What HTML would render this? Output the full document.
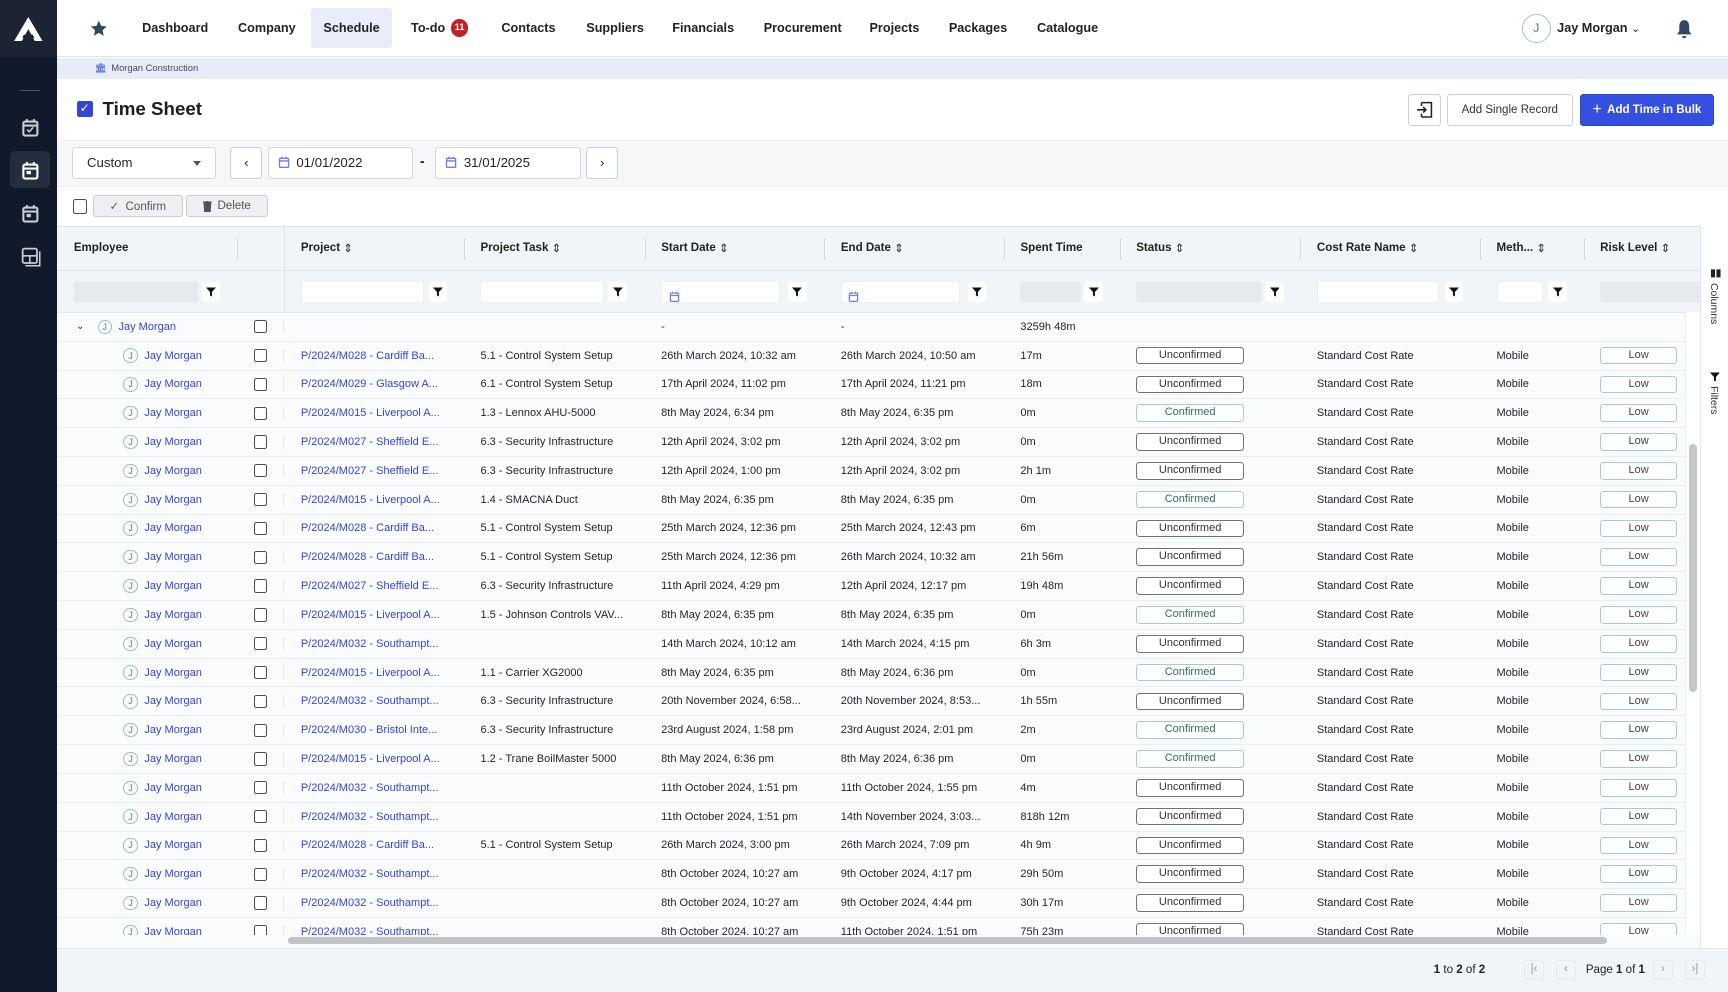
<!DOCTYPE html>
<html><head><meta charset="utf-8"><style>
html{zoom:1.10204}
*{box-sizing:border-box;margin:0;padding:0}
body{width:1568px;height:900px;overflow:hidden;font-family:"Liberation Sans",sans-serif;color:#1f2328;background:#fff;position:relative}
.side{position:absolute;left:0;top:0;width:52px;height:900px;background:#111a2b}
.logo{position:absolute;left:0;top:0;width:52px;height:52px;background:#1c2433;display:flex;align-items:center;justify-content:center}
.sic{position:absolute;left:19px}
.top{position:absolute;left:52px;top:0;right:0;height:52px;border-bottom:1px solid #dfe3e8;background:#fff}
.nav{position:absolute;top:7px;height:37px;font-size:11.5px;font-weight:bold;color:#222;display:flex;align-items:center;padding:0 13px;border-radius:3px}
.bc{position:absolute;left:52px;top:53px;right:0;height:19px;background:#e8ecf8;font-size:8.5px;color:#3d4a6b;padding-left:49px;line-height:19px}
.title{position:absolute;left:93px;top:89px;font-size:17px;font-weight:bold;color:#1a1d24}
.fbar{position:absolute;left:52px;top:127px;right:0;height:43px;background:#f5f7f9;border-top:1px solid #eef0f3;border-bottom:1px solid #eef0f3}
.inp{position:absolute;top:133px;height:29px;background:#fff;border:1px solid #d3d7de;border-radius:3px;font-size:12px;display:flex;align-items:center}
.btn{position:absolute;border-radius:3px;font-size:10.5px;display:flex;align-items:center;justify-content:center}
.thead{position:absolute;left:52px;top:205px;width:1491px;height:78px;background:#f1f4f8;border-top:1px solid #dfe3e8}
.hc{position:absolute;top:0;height:39px;font-size:10.5px;font-weight:bold;display:flex;align-items:center;color:#222}
.sep{position:absolute;top:10px;width:1px;height:20px;background:#d8dce2}
.fi{position:absolute;top:49px;height:20px;background:#fff;border-radius:3px;border:1px solid #eceff3}
.fg{background:#e6e9ed;border:none}
.fb{position:absolute;top:50px;width:17px;height:18px;background:#fff;border-radius:3px;display:flex;align-items:center;justify-content:center}
.body{position:absolute;left:52px;top:283px;width:1477px;height:565px;overflow:hidden;background:#fafbfc;border-top:1px solid #e3e6ea}
.r{display:flex;height:26.15px;align-items:center;border-bottom:1px solid #eceff2;font-size:10px;color:#1f2328;white-space:nowrap}
.r>div{overflow:hidden;flex:none}
.c1{width:163px;display:flex;align-items:center}.c2{width:43px;display:flex;justify-content:center}.c3{width:163px;padding-left:15px;color:#3446d4}.c4{width:164px;padding-left:15px}.c5{width:163px;padding-left:15px}.c6{width:163px;padding-left:15px}.c7{width:105px;padding-left:15px}.c8{width:164px;padding-left:15px}.c9{width:163px;padding-left:15px}.c10{width:94px;padding-left:15px}.c11{width:106px;padding-left:15px}
.av{width:13px;height:13px;border:1px solid #9cc3b4;border-radius:50%;font-size:8px;color:#4a8a74;display:flex;align-items:center;justify-content:center;margin-right:6px;flex:none}
.en{color:#3446d4}
.cb{width:12px;height:12px;border:1.5px solid #4a4f57;border-radius:2px;background:#fff}
.st{width:98px;height:16px;border:1px solid #6f747b;border-radius:3px;text-align:center;line-height:14px;font-size:10px;color:#333;background:#fff}
.cf{border-color:#a5cfc1;color:#2f6f5c}
.lw{width:70px;height:16px;border:1px solid #a5cfc1;border-radius:3px;text-align:center;line-height:14px;font-size:10px;color:#444;background:#fff}
.vb{border-right:1px solid #e3e6ea}
</style></head><body>
<svg width="0" height="0" style="position:absolute"><defs>
<symbol id="cal" viewBox="0 0 16 16"><rect x="2" y="3" width="12" height="12" rx="1.5" fill="none" stroke="currentColor" stroke-width="1.8"/><path d="M5 1v3M11 1v3M2 6.5h12" stroke="currentColor" stroke-width="1.8"/></symbol>
<symbol id="fun" viewBox="0 0 10 10"><path d="M0 1h10L6 5.5V10L4 9V5.5Z" fill="#111"/></symbol>
</defs></svg>
<div class="side">
<div class="logo"><svg width="26" height="22" viewBox="0 0 26 22"><path d="M13 0 L26 22 H19 L13 11 L7 22 H0 Z" fill="#fff"/><path d="M9 16 H17 L18.5 19 H7.5Z" fill="#1c2433"/></svg></div>
<div style="position:absolute;left:18px;top:82px;width:18px;height:1px;background:#4a5263"></div>
<svg class="sic" style="top:107px;color:#c8ccd4" width="17" height="17"><use href="#cal"/><path d="M5.5 10.5l2 2 3.5-4" stroke="#c8ccd4" stroke-width="1.5" fill="none"/></svg>
<div style="position:absolute;left:9px;top:137px;width:36px;height:34px;background:#252e3e;border-radius:5px"></div>
<svg class="sic" style="top:146px;color:#fff" width="17" height="17"><use href="#cal"/><rect x="5" y="9" width="4" height="3" fill="#fff"/></svg>
<svg class="sic" style="top:185px;color:#c8ccd4" width="17" height="17"><use href="#cal"/><rect x="5" y="9" width="4" height="3" fill="#c8ccd4"/></svg>
<svg class="sic" style="top:224px" width="18" height="18" viewBox="0 0 18 18"><rect x="1.5" y="1.5" width="13" height="13" rx="1.5" fill="none" stroke="#c8ccd4" stroke-width="1.6"/><path d="M1.5 8h13M8 8v6.5M17 4v13H4" stroke="#c8ccd4" stroke-width="1.4" fill="none"/></svg>
</div>
<div class="top">
<svg style="position:absolute;left:30px;top:18px" width="16" height="16" viewBox="0 0 24 24"><path d="M12 1l3.2 7 7.6.8-5.7 5.1 1.6 7.5L12 17.6 5.3 21.4l1.6-7.5L1.2 8.8 8.8 8z" fill="#2d4a5e"/></svg>
<div class="nav" style="left:64px">Dashboard</div>
<div class="nav" style="left:151px">Company</div>
<div class="nav" style="left:230px;background:#eaedf9;width:74px;justify-content:center">Schedule</div>
<div class="nav" style="left:308px">To-do <span style="display:inline-block;width:16px;height:16px;border-radius:50%;background:#c62026;color:#fff;font-size:8.5px;text-align:center;line-height:16px;margin-left:5px">11</span></div>
<div class="nav" style="left:390px">Contacts</div>
<div class="nav" style="left:467px">Suppliers</div>
<div class="nav" style="left:545px">Financials</div>
<div class="nav" style="left:628px">Procurement</div>
<div class="nav" style="left:724px">Projects</div>
<div class="nav" style="left:796px">Packages</div>
<div class="nav" style="left:876px">Catalogue</div>
<div style="position:absolute;left:1329px;top:13px;width:26px;height:26px;border:1px solid #a7c9bc;border-radius:50%;font-size:11px;color:#3f7f6a;text-align:center;line-height:24px">J</div>
<div style="position:absolute;left:1361px;top:19px;font-size:11.5px;font-weight:bold;color:#222">Jay Morgan <span style="font-weight:normal;font-size:10px">&#8964;</span></div>
<svg style="position:absolute;left:1469px;top:17px" width="15" height="18" viewBox="0 0 15 18"><path d="M7.5 1 C4 1 3 4 3 7 V11 L1 14 H14 L12 11 V7 C12 4 11 1 7.5 1Z M5.5 15.5 H9.5 A2 2 0 0 1 5.5 15.5Z" fill="#2d4a5e"/></svg>
</div>
<div class="bc"><span style="color:#3446d4;position:absolute;left:34px">&#127963;</span>Morgan Construction</div>
<div style="position:absolute;left:70px;top:92px;width:14px;height:14px;background:#3446d4;border-radius:2px;color:#fff;font-size:11px;text-align:center;line-height:14px">&#10003;</div>
<div class="title">Time Sheet</div>
<div class="btn" style="left:1278px;top:85px;width:30px;height:29px;border:1px solid #c8cfe8"><svg width="16" height="16" viewBox="0 0 16 16"><path d="M5 1.5h9v13H5M5 4.5V1.5M5 11.5v3M1 8h8M6.5 5.5 9 8l-2.5 2.5" stroke="#222" stroke-width="1.4" fill="none"/></svg></div>
<div class="btn" style="left:1313px;top:85px;width:114px;height:29px;border:1px solid #c8cfe8;color:#333">Add Single Record</div>
<div class="btn" style="left:1434px;top:85px;width:121px;height:29px;background:#3550e0;color:#fff;font-weight:bold;border:1px solid #2a44cc"><span style="font-size:14px;font-weight:normal;margin-right:5px">+</span>Add Time in Bulk</div>
<div class="fbar"></div>
<div class="inp" style="left:65px;width:131px;padding-left:13px">Custom<span style="position:absolute;right:13px;top:12px;border-left:4px solid transparent;border-right:4px solid transparent;border-top:5px solid #555"></span></div>
<div class="inp" style="left:209px;width:29px;justify-content:center;border-color:#c8cfe8">&#8249;</div>
<div class="inp" style="left:243px;width:132px;padding-left:8px"><svg width="11" height="11" style="color:#6d7ee8;margin-right:6px"><use href="#cal"/></svg>01/01/2022</div>
<div style="position:absolute;left:381px;top:140px;font-size:13px;font-weight:bold">-</div>
<div class="inp" style="left:395px;width:132px;padding-left:8px"><svg width="11" height="11" style="color:#6d7ee8;margin-right:6px"><use href="#cal"/></svg>31/01/2025</div>
<div class="inp" style="left:532px;width:29px;justify-content:center;border-color:#c8cfe8">&#8250;</div>
<div class="cb" style="position:absolute;left:66px;top:181px;width:13px;height:13px;border-width:1px"></div>
<div class="btn" style="left:84px;top:177px;width:82px;height:20px;background:#eef0f3;border:1px solid #c9cdd3;color:#555">&#10003;&nbsp; Confirm</div>
<div class="btn" style="left:169px;top:177px;width:74px;height:20px;background:#eef0f3;border:1px solid #c9cdd3;color:#555"><svg width="8" height="10" viewBox="0 0 8 10" style="margin-right:5px"><path d="M0 1h8M3 0h2M1 2h6l-.5 8h-5z" stroke="#555" fill="#555" stroke-width="1"/></svg>Delete</div>
<div class="thead">
<div class="hc" style="left:15px">Employee</div><div class="sep" style="left:163px"></div>
<div style="position:absolute;left:206px;top:0;width:1px;height:78px;background:#dfe3e8"></div>
<div class="hc" style="left:221px">Project&nbsp; <span style="font-weight:normal">&#8661;</span></div><div class="sep" style="left:369px"></div>
<div class="hc" style="left:384px">Project Task&nbsp; <span style="font-weight:normal">&#8661;</span></div><div class="sep" style="left:533px"></div>
<div class="hc" style="left:548px">Start Date&nbsp; <span style="font-weight:normal">&#8661;</span></div><div class="sep" style="left:696px"></div>
<div class="hc" style="left:711px">End Date&nbsp; <span style="font-weight:normal">&#8661;</span></div><div class="sep" style="left:859px"></div>
<div class="hc" style="left:874px">Spent Time</div><div class="sep" style="left:964px"></div>
<div class="hc" style="left:979px">Status&nbsp; <span style="font-weight:normal">&#8661;</span></div><div class="sep" style="left:1128px"></div>
<div class="hc" style="left:1143px">Cost Rate Name&nbsp; <span style="font-weight:normal">&#8661;</span></div><div class="sep" style="left:1291px"></div>
<div class="hc" style="left:1306px">Meth...&nbsp; <span style="font-weight:normal">&#8661;</span></div><div class="sep" style="left:1385px"></div>
<div class="hc" style="left:1400px">Risk Level&nbsp; <span style="font-weight:normal">&#8661;</span></div>
<div style="position:absolute;left:0;top:39px;width:1491px;height:1px;background:#e3e6ea"></div>
<div class="fi fg" style="left:15px;width:113px"></div><div class="fb" style="left:131px"><svg width="9" height="10"><use href="#fun"/></svg></div>
<div class="fi" style="left:221px;width:112px"></div><div class="fb" style="left:337px"><svg width="9" height="10"><use href="#fun"/></svg></div>
<div class="fi" style="left:384px;width:112px"></div><div class="fb" style="left:500px"><svg width="9" height="10"><use href="#fun"/></svg></div>
<div class="fi" style="left:548px;width:108px;padding:4px 0 0 6px"><svg width="10" height="10" style="color:#6d7ee8"><use href="#cal"/></svg></div><div class="fb" style="left:663px"><svg width="9" height="10"><use href="#fun"/></svg></div>
<div class="fi" style="left:711px;width:108px;padding:4px 0 0 6px"><svg width="10" height="10" style="color:#6d7ee8"><use href="#cal"/></svg></div><div class="fb" style="left:826px"><svg width="9" height="10"><use href="#fun"/></svg></div>
<div class="fi fg" style="left:874px;width:55px"></div><div class="fb" style="left:932px"><svg width="9" height="10"><use href="#fun"/></svg></div>
<div class="fi fg" style="left:979px;width:113px"></div><div class="fb" style="left:1096px"><svg width="9" height="10"><use href="#fun"/></svg></div>
<div class="fi" style="left:1143px;width:111px"></div><div class="fb" style="left:1259px"><svg width="9" height="10"><use href="#fun"/></svg></div>
<div class="fi" style="left:1306px;width:42px"></div><div class="fb" style="left:1353px"><svg width="9" height="10"><use href="#fun"/></svg></div>
<div class="fi fg" style="left:1400px;width:91px"></div>
</div>
<div style="position:absolute;left:1543px;top:205px;width:25px;height:655px;background:#fff;border-left:1px solid #e3e6ea">
<div style="position:absolute;left:8px;top:38px;font-size:9px;font-weight:bold">&#9646;&#9646;</div>
<div style="position:absolute;left:16px;top:52px;transform:rotate(90deg);transform-origin:0 0;font-size:9.5px;color:#333">Columns</div>
<svg style="position:absolute;left:8px;top:132px" width="9" height="10"><use href="#fun"/></svg>
<div style="position:absolute;left:16px;top:145px;transform:rotate(90deg);transform-origin:0 0;font-size:9.5px;color:#333">Filters</div>
</div>
<div class="body">
<div class="r"><div class="c1"><span style="margin-left:17px;margin-right:12px;font-size:9px">&#8964;</span><div class="av">J</div><span class="en">Jay Morgan</span></div><div class="c2 vb"><div class="cb"></div></div><div class="c3"></div><div class="c4"></div><div class="c5">-</div><div class="c6">-</div><div class="c7">3259h 48m</div></div>

<div class="r"><div class="c1"><div class="av" style="margin-left:60px">J</div><span class="en">Jay Morgan</span></div><div class="c2 vb"><div class="cb"></div></div><div class="c3">P/2024/M028 - Cardiff Ba...</div><div class="c4">5.1 - Control System Setup</div><div class="c5">26th March 2024, 10:32 am</div><div class="c6">26th March 2024, 10:50 am</div><div class="c7">17m</div><div class="c8"><div class="st">Unconfirmed</div></div><div class="c9">Standard Cost Rate</div><div class="c10">Mobile</div><div class="c11"><div class="lw">Low</div></div></div>
<div class="r"><div class="c1"><div class="av" style="margin-left:60px">J</div><span class="en">Jay Morgan</span></div><div class="c2 vb"><div class="cb"></div></div><div class="c3">P/2024/M029 - Glasgow A...</div><div class="c4">6.1 - Control System Setup</div><div class="c5">17th April 2024, 11:02 pm</div><div class="c6">17th April 2024, 11:21 pm</div><div class="c7">18m</div><div class="c8"><div class="st">Unconfirmed</div></div><div class="c9">Standard Cost Rate</div><div class="c10">Mobile</div><div class="c11"><div class="lw">Low</div></div></div>
<div class="r"><div class="c1"><div class="av" style="margin-left:60px">J</div><span class="en">Jay Morgan</span></div><div class="c2 vb"><div class="cb"></div></div><div class="c3">P/2024/M015 - Liverpool A...</div><div class="c4">1.3 - Lennox AHU-5000</div><div class="c5">8th May 2024, 6:34 pm</div><div class="c6">8th May 2024, 6:35 pm</div><div class="c7">0m</div><div class="c8"><div class="st cf">Confirmed</div></div><div class="c9">Standard Cost Rate</div><div class="c10">Mobile</div><div class="c11"><div class="lw">Low</div></div></div>
<div class="r"><div class="c1"><div class="av" style="margin-left:60px">J</div><span class="en">Jay Morgan</span></div><div class="c2 vb"><div class="cb"></div></div><div class="c3">P/2024/M027 - Sheffield E...</div><div class="c4">6.3 - Security Infrastructure</div><div class="c5">12th April 2024, 3:02 pm</div><div class="c6">12th April 2024, 3:02 pm</div><div class="c7">0m</div><div class="c8"><div class="st">Unconfirmed</div></div><div class="c9">Standard Cost Rate</div><div class="c10">Mobile</div><div class="c11"><div class="lw">Low</div></div></div>
<div class="r"><div class="c1"><div class="av" style="margin-left:60px">J</div><span class="en">Jay Morgan</span></div><div class="c2 vb"><div class="cb"></div></div><div class="c3">P/2024/M027 - Sheffield E...</div><div class="c4">6.3 - Security Infrastructure</div><div class="c5">12th April 2024, 1:00 pm</div><div class="c6">12th April 2024, 3:02 pm</div><div class="c7">2h 1m</div><div class="c8"><div class="st">Unconfirmed</div></div><div class="c9">Standard Cost Rate</div><div class="c10">Mobile</div><div class="c11"><div class="lw">Low</div></div></div>
<div class="r"><div class="c1"><div class="av" style="margin-left:60px">J</div><span class="en">Jay Morgan</span></div><div class="c2 vb"><div class="cb"></div></div><div class="c3">P/2024/M015 - Liverpool A...</div><div class="c4">1.4 - SMACNA Duct</div><div class="c5">8th May 2024, 6:35 pm</div><div class="c6">8th May 2024, 6:35 pm</div><div class="c7">0m</div><div class="c8"><div class="st cf">Confirmed</div></div><div class="c9">Standard Cost Rate</div><div class="c10">Mobile</div><div class="c11"><div class="lw">Low</div></div></div>
<div class="r"><div class="c1"><div class="av" style="margin-left:60px">J</div><span class="en">Jay Morgan</span></div><div class="c2 vb"><div class="cb"></div></div><div class="c3">P/2024/M028 - Cardiff Ba...</div><div class="c4">5.1 - Control System Setup</div><div class="c5">25th March 2024, 12:36 pm</div><div class="c6">25th March 2024, 12:43 pm</div><div class="c7">6m</div><div class="c8"><div class="st">Unconfirmed</div></div><div class="c9">Standard Cost Rate</div><div class="c10">Mobile</div><div class="c11"><div class="lw">Low</div></div></div>
<div class="r"><div class="c1"><div class="av" style="margin-left:60px">J</div><span class="en">Jay Morgan</span></div><div class="c2 vb"><div class="cb"></div></div><div class="c3">P/2024/M028 - Cardiff Ba...</div><div class="c4">5.1 - Control System Setup</div><div class="c5">25th March 2024, 12:36 pm</div><div class="c6">26th March 2024, 10:32 am</div><div class="c7">21h 56m</div><div class="c8"><div class="st">Unconfirmed</div></div><div class="c9">Standard Cost Rate</div><div class="c10">Mobile</div><div class="c11"><div class="lw">Low</div></div></div>
<div class="r"><div class="c1"><div class="av" style="margin-left:60px">J</div><span class="en">Jay Morgan</span></div><div class="c2 vb"><div class="cb"></div></div><div class="c3">P/2024/M027 - Sheffield E...</div><div class="c4">6.3 - Security Infrastructure</div><div class="c5">11th April 2024, 4:29 pm</div><div class="c6">12th April 2024, 12:17 pm</div><div class="c7">19h 48m</div><div class="c8"><div class="st">Unconfirmed</div></div><div class="c9">Standard Cost Rate</div><div class="c10">Mobile</div><div class="c11"><div class="lw">Low</div></div></div>
<div class="r"><div class="c1"><div class="av" style="margin-left:60px">J</div><span class="en">Jay Morgan</span></div><div class="c2 vb"><div class="cb"></div></div><div class="c3">P/2024/M015 - Liverpool A...</div><div class="c4">1.5 - Johnson Controls VAV...</div><div class="c5">8th May 2024, 6:35 pm</div><div class="c6">8th May 2024, 6:35 pm</div><div class="c7">0m</div><div class="c8"><div class="st cf">Confirmed</div></div><div class="c9">Standard Cost Rate</div><div class="c10">Mobile</div><div class="c11"><div class="lw">Low</div></div></div>
<div class="r"><div class="c1"><div class="av" style="margin-left:60px">J</div><span class="en">Jay Morgan</span></div><div class="c2 vb"><div class="cb"></div></div><div class="c3">P/2024/M032 - Southampt...</div><div class="c4"></div><div class="c5">14th March 2024, 10:12 am</div><div class="c6">14th March 2024, 4:15 pm</div><div class="c7">6h 3m</div><div class="c8"><div class="st">Unconfirmed</div></div><div class="c9">Standard Cost Rate</div><div class="c10">Mobile</div><div class="c11"><div class="lw">Low</div></div></div>
<div class="r"><div class="c1"><div class="av" style="margin-left:60px">J</div><span class="en">Jay Morgan</span></div><div class="c2 vb"><div class="cb"></div></div><div class="c3">P/2024/M015 - Liverpool A...</div><div class="c4">1.1 - Carrier XG2000</div><div class="c5">8th May 2024, 6:35 pm</div><div class="c6">8th May 2024, 6:36 pm</div><div class="c7">0m</div><div class="c8"><div class="st cf">Confirmed</div></div><div class="c9">Standard Cost Rate</div><div class="c10">Mobile</div><div class="c11"><div class="lw">Low</div></div></div>
<div class="r"><div class="c1"><div class="av" style="margin-left:60px">J</div><span class="en">Jay Morgan</span></div><div class="c2 vb"><div class="cb"></div></div><div class="c3">P/2024/M032 - Southampt...</div><div class="c4">6.3 - Security Infrastructure</div><div class="c5">20th November 2024, 6:58...</div><div class="c6">20th November 2024, 8:53...</div><div class="c7">1h 55m</div><div class="c8"><div class="st">Unconfirmed</div></div><div class="c9">Standard Cost Rate</div><div class="c10">Mobile</div><div class="c11"><div class="lw">Low</div></div></div>
<div class="r"><div class="c1"><div class="av" style="margin-left:60px">J</div><span class="en">Jay Morgan</span></div><div class="c2 vb"><div class="cb"></div></div><div class="c3">P/2024/M030 - Bristol Inte...</div><div class="c4">6.3 - Security Infrastructure</div><div class="c5">23rd August 2024, 1:58 pm</div><div class="c6">23rd August 2024, 2:01 pm</div><div class="c7">2m</div><div class="c8"><div class="st cf">Confirmed</div></div><div class="c9">Standard Cost Rate</div><div class="c10">Mobile</div><div class="c11"><div class="lw">Low</div></div></div>
<div class="r"><div class="c1"><div class="av" style="margin-left:60px">J</div><span class="en">Jay Morgan</span></div><div class="c2 vb"><div class="cb"></div></div><div class="c3">P/2024/M015 - Liverpool A...</div><div class="c4">1.2 - Trane BoilMaster 5000</div><div class="c5">8th May 2024, 6:36 pm</div><div class="c6">8th May 2024, 6:36 pm</div><div class="c7">0m</div><div class="c8"><div class="st cf">Confirmed</div></div><div class="c9">Standard Cost Rate</div><div class="c10">Mobile</div><div class="c11"><div class="lw">Low</div></div></div>
<div class="r"><div class="c1"><div class="av" style="margin-left:60px">J</div><span class="en">Jay Morgan</span></div><div class="c2 vb"><div class="cb"></div></div><div class="c3">P/2024/M032 - Southampt...</div><div class="c4"></div><div class="c5">11th October 2024, 1:51 pm</div><div class="c6">11th October 2024, 1:55 pm</div><div class="c7">4m</div><div class="c8"><div class="st">Unconfirmed</div></div><div class="c9">Standard Cost Rate</div><div class="c10">Mobile</div><div class="c11"><div class="lw">Low</div></div></div>
<div class="r"><div class="c1"><div class="av" style="margin-left:60px">J</div><span class="en">Jay Morgan</span></div><div class="c2 vb"><div class="cb"></div></div><div class="c3">P/2024/M032 - Southampt...</div><div class="c4"></div><div class="c5">11th October 2024, 1:51 pm</div><div class="c6">14th November 2024, 3:03...</div><div class="c7">818h 12m</div><div class="c8"><div class="st">Unconfirmed</div></div><div class="c9">Standard Cost Rate</div><div class="c10">Mobile</div><div class="c11"><div class="lw">Low</div></div></div>
<div class="r"><div class="c1"><div class="av" style="margin-left:60px">J</div><span class="en">Jay Morgan</span></div><div class="c2 vb"><div class="cb"></div></div><div class="c3">P/2024/M028 - Cardiff Ba...</div><div class="c4">5.1 - Control System Setup</div><div class="c5">26th March 2024, 3:00 pm</div><div class="c6">26th March 2024, 7:09 pm</div><div class="c7">4h 9m</div><div class="c8"><div class="st">Unconfirmed</div></div><div class="c9">Standard Cost Rate</div><div class="c10">Mobile</div><div class="c11"><div class="lw">Low</div></div></div>
<div class="r"><div class="c1"><div class="av" style="margin-left:60px">J</div><span class="en">Jay Morgan</span></div><div class="c2 vb"><div class="cb"></div></div><div class="c3">P/2024/M032 - Southampt...</div><div class="c4"></div><div class="c5">8th October 2024, 10:27 am</div><div class="c6">9th October 2024, 4:17 pm</div><div class="c7">29h 50m</div><div class="c8"><div class="st">Unconfirmed</div></div><div class="c9">Standard Cost Rate</div><div class="c10">Mobile</div><div class="c11"><div class="lw">Low</div></div></div>
<div class="r"><div class="c1"><div class="av" style="margin-left:60px">J</div><span class="en">Jay Morgan</span></div><div class="c2 vb"><div class="cb"></div></div><div class="c3">P/2024/M032 - Southampt...</div><div class="c4"></div><div class="c5">8th October 2024, 10:27 am</div><div class="c6">9th October 2024, 4:44 pm</div><div class="c7">30h 17m</div><div class="c8"><div class="st">Unconfirmed</div></div><div class="c9">Standard Cost Rate</div><div class="c10">Mobile</div><div class="c11"><div class="lw">Low</div></div></div>
<div class="r"><div class="c1"><div class="av" style="margin-left:60px">J</div><span class="en">Jay Morgan</span></div><div class="c2 vb"><div class="cb"></div></div><div class="c3">P/2024/M032 - Southampt...</div><div class="c4"></div><div class="c5">8th October 2024, 10:27 am</div><div class="c6">11th October 2024, 1:51 pm</div><div class="c7">75h 23m</div><div class="c8"><div class="st">Unconfirmed</div></div><div class="c9">Standard Cost Rate</div><div class="c10">Mobile</div><div class="c11"><div class="lw">Low</div></div></div>
</div>
<div style="position:absolute;left:1529px;top:283px;width:14px;height:565px;background:#fff;border-left:1px solid #eceff2"><div style="position:absolute;left:3px;top:120px;width:7px;height:225px;background:#c4c6c9;border-radius:4px"></div></div>
<div style="position:absolute;left:52px;top:848px;width:1491px;height:12px;background:#fafbfc"><div style="position:absolute;left:209px;top:2px;width:1197px;height:7px;background:#c1c3c6;border-radius:4px"></div></div>
<div style="position:absolute;left:52px;top:860px;right:0;height:40px;background:#f1f4f8;border-top:1px solid #e3e6ea;font-size:10.5px;color:#222">
<div style="position:absolute;left:1249px;top:14px"><b>1</b> to <b>2</b> of <b>2</b></div>
<div style="position:absolute;left:1331px;top:10px;width:18px;height:18px;border:1px solid #e6e9ed;border-radius:3px;color:#999;text-align:center;line-height:16px">|&lsaquo;</div>
<div style="position:absolute;left:1360px;top:10px;width:18px;height:18px;border:1px solid #e6e9ed;border-radius:3px;color:#999;text-align:center;line-height:16px">&lsaquo;</div>
<div style="position:absolute;left:1387px;top:14px">Page <b>1</b> of <b>1</b></div>
<div style="position:absolute;left:1448px;top:10px;width:18px;height:18px;border:1px solid #e6e9ed;border-radius:3px;color:#999;text-align:center;line-height:16px">&rsaquo;</div>
<div style="position:absolute;left:1477px;top:10px;width:18px;height:18px;border:1px solid #e6e9ed;border-radius:3px;color:#999;text-align:center;line-height:16px">&rsaquo;|</div>
</div>
</body></html>
